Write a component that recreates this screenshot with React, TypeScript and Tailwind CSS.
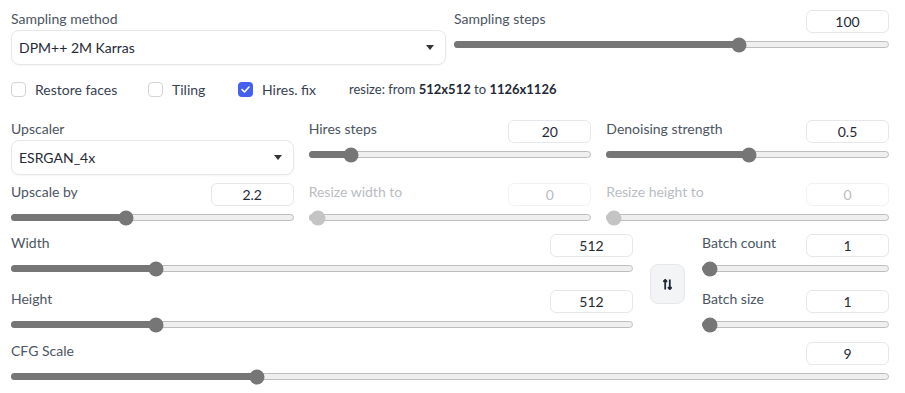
import React from 'react';

const font = { fontFamily: 'Lato, "Noto Sans", sans-serif' };

function NumBox({ value, disabled }: { value: string; disabled?: boolean }) {
    return (
        <div
            className={`w-[83px] h-[23px] mt-px flex items-center justify-center rounded-[6px] border text-[14px] ${
                disabled ? 'border-[#f1f2f4] text-[#b9bcc1]' : 'border-[#e5e7eb] text-[#1f2937]'
            }`}
        >
            {value}
        </div>
    );
}

function Slider({ pct, disabled }: { pct: number; disabled?: boolean }) {
    return (
        <div className="h-[21px] flex items-center">
            <div className="relative w-full h-[7px] rounded-full border border-[#bdbdbd] bg-[#efefef]">
                <div
                    className={`absolute left-[-1px] top-[-1px] h-[7px] rounded-full ${disabled ? 'bg-[#c4c4c4]' : 'bg-[#767676]'}`}
                    style={{ width: `${pct * 100}%` }}
                />
                <div
                    className={`absolute top-1/2 w-[15px] h-[15px] -translate-x-1/2 -translate-y-1/2 rounded-full ${disabled ? 'bg-[#c4c4c4]' : 'bg-[#767676]'}`}
                    style={{ left: `${pct * 100}%` }}
                />
            </div>
        </div>
    );
}

function SliderBlock({ label, value, pct, disabled }: { label: string; value: string; pct: number; disabled?: boolean }) {
    return (
        <div className="flex flex-col">
            <div className="h-[25px] flex items-start justify-between">
                <span className={`text-[14px] leading-5 ${disabled ? 'text-[#b9bcc1]' : 'text-[#4b5563]'}`}>{label}</span>
                <NumBox value={value} disabled={disabled} />
            </div>
            <Slider pct={pct} disabled={disabled} />
        </div>
    );
}

function Select({ label, value }: { label: string; value: string }) {
    return (
        <div className="flex flex-col">
            <div className="h-[21px] text-[14px] leading-5 text-[#4b5563]">{label}</div>
            <div className="h-[35px] flex items-center justify-between rounded-[8px] border border-[#e5e7eb] pl-[7px] pr-[11px] shadow-[0_1px_2px_rgba(0,0,0,0.04)]">
                <span className="text-[14px] text-[#1f2937]">{value}</span>
                <svg width="8" height="5" viewBox="0 0 8 5">
                    <path d="M0 0 H8 L4 5 Z" fill="#333" />
                </svg>
            </div>
        </div>
    );
}

function Check({ label, checked }: { label: string; checked?: boolean }) {
    return (
        <div className="flex items-center gap-[9px]">
            {checked ? (
                <div className="w-[15px] h-[15px] rounded-[4px] bg-[#4361ee] flex items-center justify-center">
                    <svg width="9" height="7" viewBox="0 0 9 7">
                        <path d="M1 3.5 L3.5 6 L8 1" stroke="white" strokeWidth="1.6" fill="none" strokeLinecap="round" strokeLinejoin="round" />
                    </svg>
                </div>
            ) : (
                <div className="w-[15px] h-[15px] rounded-[4px] border border-[#d1d5db] bg-white" />
            )}
            <span className="text-[14px] text-[#374151]">{label}</span>
        </div>
    );
}

export default function App() {
    return (
        <div className="w-[905px] h-[393px] bg-white pt-[9px] pl-[11px] pr-[16px] overflow-hidden" style={font}>
            {/* Sampling */}
            <div className="grid grid-cols-2 gap-x-[8px]">
                <Select label="Sampling method" value="DPM++ 2M Karras" />
                <SliderBlock label="Sampling steps" value="100" pct={0.657} />
            </div>

            {/* Checkboxes */}
            <div className="mt-[17px] h-[15px] flex items-center">
                <div className="w-[137px]"><Check label="Restore faces" /></div>
                <div className="w-[90px]"><Check label="Tiling" /></div>
                <div className="w-[111px]"><Check label="Hires. fix" checked /></div>
                <span className="text-[13px] text-[#374151]">
                    resize: from <b className="text-[#1f2937]">512x512</b> to <b className="text-[#1f2937]">1126x1126</b>
                </span>
            </div>

            {/* Hires */}
            <div className="mt-[22px] grid grid-cols-3 gap-x-[15px]">
                <Select label="Upscaler" value="ESRGAN_4x" />
                <SliderBlock label="Hires steps" value="20" pct={0.149} />
                <SliderBlock label="Denoising strength" value="0.5" pct={0.504} />
            </div>
            <div className="mt-[7px] grid grid-cols-3 gap-x-[15px]">
                <SliderBlock label="Upscale by" value="2.2" pct={0.406} />
                <SliderBlock label="Resize width to" value="0" pct={0.028} disabled />
                <SliderBlock label="Resize height to" value="0" pct={0.025} disabled />
            </div>

            {/* Dimensions + batch */}
            <div className="mt-[5px] flex items-center">
                <div className="w-[622px] flex flex-col gap-[10px]">
                    <SliderBlock label="Width" value="512" pct={0.2315} />
                    <SliderBlock label="Height" value="512" pct={0.2315} />
                </div>
                <div className="ml-[17px] w-[35px] h-[40px] rounded-[8px] border border-[#e5e7eb] bg-[#f3f4f6] flex items-center justify-center">
                    <svg width="9" height="11" viewBox="0 0 9 11">
                        <path d="M2.2 10.5 V1 M0.3 2.8 L2.2 0.8 L4.1 2.8" stroke="#1f2937" strokeWidth="1.8" fill="none" />
                        <path d="M6.8 0.5 V10 M4.9 8.2 L6.8 10.2 L8.7 8.2" stroke="#1f2937" strokeWidth="1.8" fill="none" />
                    </svg>
                </div>
                <div className="ml-[17px] flex-1 flex flex-col gap-[10px]">
                    <SliderBlock label="Batch count" value="1" pct={0.037} />
                    <SliderBlock label="Batch size" value="1" pct={0.037} />
                </div>
            </div>

            <div className="mt-[6px]">
                <SliderBlock label="CFG Scale" value="9" pct={0.28} />
            </div>
        </div>
    );
}
